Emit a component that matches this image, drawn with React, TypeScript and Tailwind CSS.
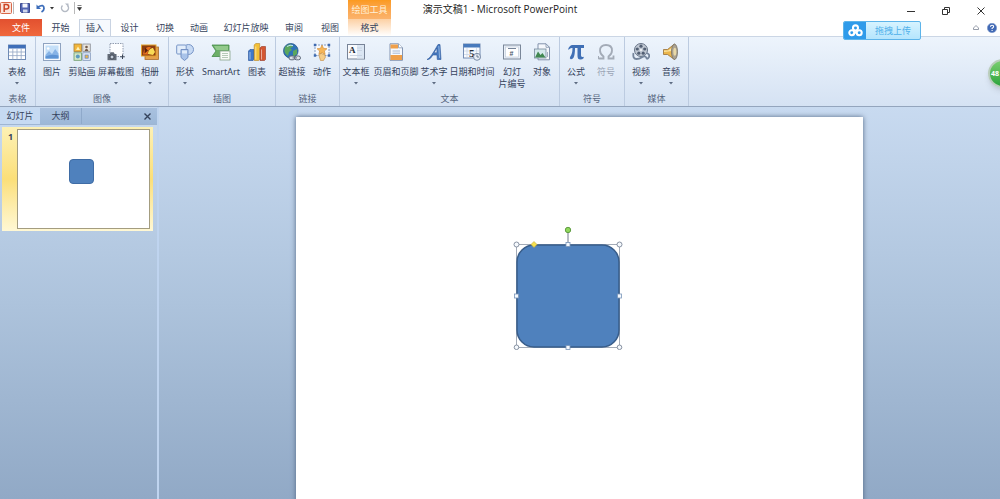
import React, { useState } from "react";
import { clsx } from "clsx";

type IconProps = { children: React.ReactNode };

type Tool = {
  label: string;
  width: string;
  icon: React.ReactNode;
  arrow?: boolean;
  disabled?: boolean;
};

type ToolGroup = {
  name: string;
  tools: Tool[];
  width: string;
};

const Icon = ({ children }: IconProps) => (
  <svg viewBox="0 0 18 18" className="h-[18px] w-[18px] shrink-0" fill="none" aria-hidden="true">
    {children}
  </svg>
);

const TableIcon = () => (
  <Icon>
    <rect x="0.5" y="2" width="17" height="14.5" fill="#fff" stroke="#6f8bb5" />
    <rect x="0.5" y="2" width="17" height="3.5" fill="#3f6fb8" />
    <path d="M1 9h16M1 12.6h16M4.8 5.5v11M9 5.5v11M13.2 5.5v11" stroke="#93a6c4" strokeWidth="0.8" />
  </Icon>
);

const PictureIcon = () => (
  <Icon>
    <rect x="0.5" y="0.5" width="17" height="17" fill="#f7fafe" stroke="#8fa3c0" />
    <rect x="2.5" y="2.5" width="13" height="13" fill="#c4dff8" />
    <path d="M2.5 12l3.5-4 3 3 3.2-5 3.3 4.5v5h-13z" fill="#86b3e6" />
    <path d="M2.5 13.5q6-3 13-1v3h-13z" fill="#5c93d4" />
    <circle cx="5.2" cy="5.5" r="1.3" fill="#fff" />
  </Icon>
);

const ClipArtIcon = () => (
  <Icon>
    <rect x="1" y="1" width="7.5" height="7.5" fill="#f2b63c" stroke="#a5803a" strokeWidth="0.8" />
    <rect x="9.8" y="1" width="7.5" height="7.5" fill="#e8e4dc" stroke="#8b8f98" strokeWidth="0.8" />
    <rect x="1" y="9.8" width="7.5" height="7.5" fill="#d5e8c9" stroke="#6c9a68" strokeWidth="0.8" />
    <rect x="9.8" y="9.8" width="7.5" height="7.5" fill="#e7eefa" stroke="#7d93b7" strokeWidth="0.8" />
    <path d="M3 7l2-3.5 2 3.5z" fill="#fff2b8" />
    <circle cx="13.5" cy="4" r="1.3" fill="#745b4b" />
    <path d="M11.500 8q2-4.500 4 0z" fill="#745b4b" />
    <circle cx="4.8" cy="13.5" r="2" fill="#5d9cc0" />
    <rect x="12" y="12" width="3.200" height="3.200" fill="#f0b748" stroke="#6787c0" strokeWidth="0.8" />
  </Icon>
);

const ScreenshotIcon = () => (
  <Icon>
    <rect x="3" y="0.5" width="13" height="13" fill="#fdfeff" stroke="#77849a" strokeWidth="0.8" strokeDasharray="1.5 1" />
    <path d="M0.5 11h2.200l1-1.800h3l1 1.800h1.800v6.200h-9z" fill="#626a76" />
    <circle cx="5" cy="14" r="2" fill="#c6cfdb" stroke="#343b46" strokeWidth="0.8" />
    <path d="M15.500 11.500v4.500M13.200 13.800h4.600" stroke="#3c4657" />
  </Icon>
);

const AlbumIcon = () => (
  <Icon>
    <rect x="4" y="4" width="13.5" height="12.5" fill="#e4a04c" stroke="#aa6d2b" strokeWidth="0.8" />
    <rect x="0.5" y="2" width="14.500" height="11" fill="#8b3d12" stroke="#e3a22a" />
    <path d="M2 11.500c1-7 5-8 8-7.500-2 3-4 4-3 7.500z" fill="#e7711e" />
    <path d="M7 11c0-4 3-6 5-6l2 4-2 3z" fill="#f9db56" />
    <path d="M4 4.500l3 3-3.500 3z" fill="#5b220d" />
  </Icon>
);

const ShapesIcon = () => (
  <Icon>
    <circle cx="12.5" cy="6.5" r="5" fill="#c6d9f3" stroke="#7795c7" />
    <rect x="0.7" y="2" width="9.5" height="9" rx="1" fill="#e2edfa" stroke="#7795c7" />
    <path d="M5 6.500h7v8l-3.500 3-3.500-3z" fill="#a9c3e9" stroke="#7491c4" />
    <path d="M6 7.500h5v3h-5z" fill="#dfebfa" />
  </Icon>
);

const SmartArtIcon = () => (
  <svg viewBox="0 0 20 18" className="h-[18px] w-5 shrink-0" fill="none" aria-hidden="true">
    <path d="M1 2h17v5l-2 6.500H1l4-5.500z" fill="#6caf67" stroke="#458b49" strokeWidth="0.8" />
    <path d="M3 3h14v4H5.500z" fill="#92c98b" />
    <rect x="9" y="8" width="10" height="9" fill="#f8fbf7" stroke="#87a48b" strokeWidth="0.8" />
    <path d="M11 10.500h6M11 12.500h6M11 14.500h6" stroke="#a3bca4" strokeWidth="0.8" />
  </svg>
);

const ChartIcon = () => (
  <Icon>
    <path d="M0.500 8l1.500-1.500h4v10l-1 1h-4.500z" fill="#3f78ca" stroke="#244f97" strokeWidth="0.6" />
    <path d="M6.200 2l1.500-1.500h4v16l-1 1h-4.500z" fill="#f4c035" stroke="#b6842a" strokeWidth="0.6" />
    <path d="M12 5l1.500-1.500h4v13l-1 1h-4.500z" fill="#d45732" stroke="#953823" strokeWidth="0.6" />
    <path d="M2 9v7.500M7.800 3.500v13M13.500 6.500v10" stroke="#fff" strokeOpacity="0.5" />
  </Icon>
);

const HyperlinkIcon = () => (
  <Icon>
    <circle cx="7.800" cy="7.800" r="7.300" fill="#2e73b8" stroke="#24558b" strokeWidth="0.8" />
    <path d="M2 4q4-4 7-2l1 2-3 1 2 2-3 2-1 4q-5-3-3-9zM10 8l4-2v5l-4 3z" fill="#5ba75d" />
    <path d="M4 3.500q3-2 6-1" stroke="#bee0f6" />
    <rect x="6" y="13" width="6" height="3.800" rx="1.900" fill="#dce2eb" stroke="#606b7c" />
    <rect x="11.500" y="13" width="6" height="3.800" rx="1.900" fill="#dce2eb" stroke="#606b7c" />
    <path d="M9.500 14.900h4.500" stroke="#606b7c" />
  </Icon>
);

const ActionIcon = () => (
  <Icon>
    <rect x="2" y="2" width="14" height="10.500" fill="#f6f9fe" stroke="#6786b6" strokeWidth="0.8" strokeDasharray="2 1" />
    <path d="M9 2l1.500 3.300 3.500.4-2.600 2.300.8 3.500-3.200-1.800-3.200 1.800.8-3.500-2.600-2.300 3.500-.4z" fill="#f5b558" stroke="#d38b30" strokeWidth="0.6" />
    <path d="M6 12.500l2-2.500 1.500 1 2 .5 1 2.500-2 3.500h-3z" fill="#f5cc87" stroke="#c38a3f" strokeWidth="0.6" />
    <path d="M.8.800h2.400v2.400H.8zM14.800.800h2.400v2.400h-2.400zM.8 11.300h2.400v2.400H.8zM14.800 11.300h2.400v2.400h-2.400z" fill="#3e6aaf" />
  </Icon>
);

const TextBoxIcon = () => (
  <Icon>
    <rect x="0.500" y="1.500" width="17" height="14.500" fill="#f8fafd" stroke="#778397" />
    <path d="M10 2h7v13.500h-7z" fill="#dbe6f3" />
    <path d="M10 5h5M10 7.500h5M3 12.500h12" stroke="#c3cedd" strokeWidth="0.8" />
    <text x="2" y="10" fontSize="9" fontWeight="700" fontFamily="Liberation Serif, serif" fill="#242b37">A</text>
  </Icon>
);

const HeaderFooterIcon = () => (
  <Icon>
    <path d="M3 .8h8.500l4 4v12.500H3z" fill="#f7fafe" stroke="#8395b2" />
    <path d="M3.500 1.500h7.500v4H3.500z" fill="#efa04b" />
    <path d="M3.500 12h11.500v5H3.500z" fill="#efa04b" />
    <path d="M11.500.8v4h4" fill="#fff" stroke="#8395b2" strokeWidth="0.8" />
    <path d="M5.500 8h7.500M5.500 10.200h7.500" stroke="#a7b9d4" />
  </Icon>
);

const WordArtIcon = () => (
  <Icon>
    <path d="M2 16.500c3-1 7-8 11-15l2 0 1 15h-3.700l-.3-4.500-4.200 0c-1.500 2.500-3 4.800-5.800 4.500zM9 9.800h3l-.2-4.800z" fill="#4779bf" stroke="#2c589a" strokeWidth="0.6" />
    <path d="M13.800 3l.8 12" stroke="#8fb5e2" />
  </Icon>
);

const DateIcon = () => (
  <Icon>
    <rect x="0.500" y="1" width="16.500" height="14" fill="#f9fbfe" stroke="#768db3" />
    <path d="M.5 1h16.500v3.500H.5z" fill="#487abc" />
    <path d="M1 8h16M1 11.500h16M4 5v10M13.500 5v10" stroke="#c5d2e5" strokeWidth="0.7" />
    <text x="6" y="13.500" fontSize="11" fontWeight="700" fontFamily="Liberation Serif, serif" fill="#252d3b">5</text>
    <circle cx="14" cy="13.800" r="3.500" fill="#e7edf6" stroke="#798ba6" />
    <path d="M14 11.500v2.500h2" stroke="#53647f" strokeWidth="0.8" />
  </Icon>
);

const SlideNumberIcon = () => (
  <Icon>
    <rect x="0.500" y="2" width="17" height="14" fill="#eaf0f8" stroke="#7a8799" />
    <rect x="2.500" y="4" width="13" height="10" fill="#fff" stroke="#bac6d5" strokeWidth="0.6" />
    <path d="M5 5.500h8" stroke="#758499" />
    <text x="6.500" y="13" fontSize="7" fontWeight="700" fontFamily="Liberation Sans, sans-serif" fill="#4a5668">#</text>
  </Icon>
);

const ObjectIcon = () => (
  <Icon>
    <path d="M5 .8h8l3.500 3.500v12.500H5z" fill="#f5f8fc" stroke="#8292ab" />
    <path d="M13 .8v3.500h3.500" stroke="#8292ab" strokeWidth="0.8" />
    <rect x="1.500" y="6" width="11.500" height="9" fill="#d5e9ec" stroke="#798a9f" strokeWidth="0.8" />
    <path d="M2 14.500l3-6 2.500 3.500 2-2 3 4.500z" fill="#418851" />
    <path d="M14.500 9v5" stroke="#91a0b4" strokeWidth="0.8" />
  </Icon>
);

const EquationIcon = () => (
  <Icon>
    <path d="M1 6.500q1.500-4.500 4.500-4.500h11.500v3h-3v7.500q0 2 2.500 1.200l.3 1.300q-1.500 1.500-3.500 1.500-2.800 0-2.800-3.500v-8h-2.500q0 7-1.500 9.800-1 1.800-2.800 1.400-1.500-.6-.5-2.400 2.300-3 2.300-8.800-2.500-.4-3.500 1.500z" fill="#3f6fb5" />
  </Icon>
);

const SymbolIcon = () => (
  <Icon>
    <path d="M1.500 15.500h5v-2q-3.500-2.500-3.500-6 0-5.500 6-5.500t6 5.500q0 3.500-3.500 6v2h5v-3" stroke="#a3abb7" strokeWidth="1.800" />
    <path d="M1.500 16v-3" stroke="#a3abb7" />
  </Icon>
);

const VideoIcon = () => (
  <Icon>
    <circle cx="9" cy="7" r="6.500" fill="#c0c8d3" stroke="#667386" />
    <circle cx="9" cy="3.200" r="1.600" fill="#536074" />
    <circle cx="5.300" cy="6" r="1.600" fill="#536074" />
    <circle cx="12.700" cy="6" r="1.600" fill="#536074" />
    <circle cx="6.800" cy="10.200" r="1.600" fill="#536074" />
    <circle cx="11.200" cy="10.200" r="1.600" fill="#536074" />
    <circle cx="9" cy="7" r="0.900" fill="#fff" />
    <path d="M1.500 10q-1 6 3 6 3 0 5-1.500 4-2.500 5 .5.500 2 2.500-1 1-3-2.500-4" stroke="#75859b" strokeWidth="1.800" />
  </Icon>
);

const AudioIcon = () => (
  <Icon>
    <path d="M1.500 6.500h4l7-5.500v15.500l-7-5h-4z" fill="#ebb64c" stroke="#987037" strokeWidth="0.8" />
    <path d="M2 7.500h4l4-3v3.500l-8 1z" fill="#fbe4a3" />
    <ellipse cx="12.500" cy="8.800" rx="3" ry="7.700" fill="#aaa292" stroke="#777061" strokeWidth="0.8" />
    <ellipse cx="12.800" cy="8.800" rx="1.500" ry="4" fill="#e9d9a7" />
  </Icon>
);

const tabs = [
  { name: "开始", width: "w-[37px]" },
  { name: "插入", width: "w-8" },
  { name: "设计", width: "w-[37px]" },
  { name: "切换", width: "w-[34px]" },
  { name: "动画", width: "w-[34px]" },
  { name: "幻灯片放映", width: "w-[60px]" },
  { name: "审阅", width: "w-9" },
  { name: "视图", width: "w-9" },
];

const groups: ToolGroup[] = [
  {
    name: "表格",
    width: "w-9",
    tools: [{ label: "表格", width: "w-[34px]", icon: <TableIcon />, arrow: true }],
  },
  {
    name: "图像",
    width: "w-[133px]",
    tools: [
      { label: "图片", width: "w-8", icon: <PictureIcon /> },
      { label: "剪贴画", width: "w-7", icon: <ClipArtIcon /> },
      { label: "屏幕截图", width: "w-10", icon: <ScreenshotIcon />, arrow: true },
      { label: "相册", width: "w-7", icon: <AlbumIcon />, arrow: true },
    ],
  },
  {
    name: "插图",
    width: "w-[107px]",
    tools: [
      { label: "形状", width: "w-8", icon: <ShapesIcon />, arrow: true },
      { label: "SmartArt", width: "w-10", icon: <SmartArtIcon /> },
      { label: "图表", width: "w-8", icon: <ChartIcon /> },
    ],
  },
  {
    name: "链接",
    width: "w-16",
    tools: [
      { label: "超链接", width: "w-8", icon: <HyperlinkIcon /> },
      { label: "动作", width: "w-7", icon: <ActionIcon /> },
    ],
  },
  {
    name: "文本",
    width: "w-[220px]",
    tools: [
      { label: "文本框", width: "w-8", icon: <TextBoxIcon />, arrow: true },
      { label: "页眉和页脚", width: "w-12", icon: <HeaderFooterIcon /> },
      { label: "艺术字", width: "w-7", icon: <WordArtIcon />, arrow: true },
      { label: "日期和时间", width: "w-12", icon: <DateIcon /> },
      { label: "幻灯\n片编号", width: "w-8", icon: <SlideNumberIcon /> },
      { label: "对象", width: "w-7", icon: <ObjectIcon /> },
    ],
  },
  {
    name: "符号",
    width: "w-[65px]",
    tools: [
      { label: "公式", width: "w-8", icon: <EquationIcon />, arrow: true },
      { label: "符号", width: "w-7", icon: <SymbolIcon />, disabled: true },
    ],
  },
  {
    name: "媒体",
    width: "w-16",
    tools: [
      { label: "视频", width: "w-8", icon: <VideoIcon />, arrow: true },
      { label: "音频", width: "w-7", icon: <AudioIcon />, arrow: true },
    ],
  },
];

const DownArrow = () => (
  <svg viewBox="0 0 4 3" className="mt-1 h-[3px] w-1" aria-hidden="true">
    <path d="M0 0h4L2 2.500z" fill="#5d6b82" />
  </svg>
);

const ToolButton = ({ tool }: { tool: Tool }) => (
  <button
    type="button"
    disabled={tool.disabled}
    className={clsx(
      "flex flex-col items-center whitespace-pre text-center text-[9px] leading-3",
      tool.width,
      tool.disabled ? "text-[#9aa5b6]" : "text-[#35435c]"
    )}
  >
    {tool.icon}
    <span className="mt-[5px]">{tool.label}</span>
    {tool.arrow && <DownArrow />}
  </button>
);

const QuickAccess = () => (
  <div className="flex h-4 w-[348px] shrink-0 items-center">
    <button type="button" aria-label="PowerPoint" className="w-3">
      <svg viewBox="0 0 12 12" className="h-3 w-3">
        <rect x="0.500" y="0.500" width="11" height="11" rx="1" fill="#fbe5dc" stroke="#d8694a" />
        <path d="M4.200 10V2.500h2.300a2 2 0 0 1 0 4.500H4.200" fill="none" stroke="#cc4525" strokeWidth="1.500" />
      </svg>
    </button>
    <span className="ml-px h-3 w-px bg-[#b9b9b9]" />
    <button type="button" aria-label="保存" className="ml-[6px]">
      <svg viewBox="0 0 10 10" className="h-[10px] w-[10px]">
        <path d="M.5.500h9v9h-8l-1-1z" fill="#5265b3" stroke="#3c4b91" />
        <path d="M2.500.500h5v4h-5z" fill="#f4f6fc" />
        <path d="M3 6.500h4.500v3H3z" fill="#cfd6ec" />
      </svg>
    </button>
    <button type="button" aria-label="撤消" className="ml-[6px]">
      <svg viewBox="0 0 10 10" className="h-[10px] w-[10px]" fill="none">
        <path d="M2 4q6-3.500 6 1.500 0 2-2.500 3.500" stroke="#3c6dba" strokeWidth="1.800" />
        <path d="M.5 1.500v4.500h4.500z" fill="#3c6dba" />
      </svg>
    </button>
    <svg viewBox="0 0 4 3" className="ml-1 h-[3px] w-1">
      <path d="M0 0h4L2 2.500z" fill="#333" />
    </svg>
    <button type="button" aria-label="恢复" disabled className="ml-[6px]">
      <svg viewBox="0 0 10 10" className="h-[10px] w-[10px]" fill="none">
        <path d="M7.500 2.500a3.500 3.500 0 1 1-5 0" stroke="#b4bac4" strokeWidth="1.500" />
        <path d="M5 .5h3.500v3.500z" fill="#b4bac4" />
      </svg>
    </button>
    <span className="ml-1 h-3 w-px bg-[#b9b9b9]" />
    <button type="button" aria-label="自定义快速访问工具栏" className="ml-[2px]">
      <svg viewBox="0 0 5 6" className="h-[6px] w-[5px]">
        <path d="M.5.500h4M.5 2.500h4L2.500 5.500z" fill="#333" stroke="#333" strokeWidth="0.6" />
      </svg>
    </button>
  </div>
);

const WindowButtons = () => (
  <div className="flex flex-1 justify-end">
    <div className="flex items-center gap-[27px] pr-[15px] pt-[2px]">
      <button type="button" aria-label="最小化">
        <svg viewBox="0 0 8 8" className="h-2 w-2"><path d="M0 4.500h8" stroke="#333" /></svg>
      </button>
      <button type="button" aria-label="还原">
        <svg viewBox="0 0 8 8" className="h-2 w-2" fill="none" stroke="#333">
          <path d="M.5 2.500h5v5h-5zM2.500 2.500v-2h5v5h-2" />
        </svg>
      </button>
      <button type="button" aria-label="关闭">
        <svg viewBox="0 0 8 8" className="h-2 w-2"><path d="M.5.500l7 7M7.500.500l-7 7" stroke="#333" /></svg>
      </button>
    </div>
  </div>
);

const Header = () => {
  const [active, setActive] = useState("插入");

  return (
    <header className="bg-white text-[#35435c]">
      <div className="flex h-[19px]">
        <div className="flex flex-1">
          <QuickAccess />
          <div className="w-[43px] shrink-0 bg-linear-to-b from-[#fb9a1e] to-[#fbb36c] pt-1 text-center text-[9px] leading-3 text-[#fff0d8]">
            绘图工具
          </div>
        </div>
        <h1 className="pt-px font-['Open_Sans','Noto_Sans_CJK_SC',sans-serif] text-[10px] leading-4 text-[#222]">
          演示文稿1 - Microsoft PowerPoint
        </h1>
        <WindowButtons />
      </div>
      <nav className="flex h-[17px] items-stretch text-[9px] leading-[17px]">
        <button type="button" className="w-[42px] bg-linear-to-b from-[#e2502f] to-[#f0683c] text-white">
          文件
        </button>
        {tabs.map((tab) => (
          <button
            key={tab.name}
            type="button"
            onClick={() => setActive(tab.name)}
            className={clsx(
              "whitespace-nowrap",
              tab.width,
              active === tab.name && "border-x border-t border-[#c9d3e2] bg-[#f6f9fd] leading-4"
            )}
          >
            {tab.name}
          </button>
        ))}
        <button type="button" className="w-[43px] bg-linear-to-b from-[#fcd0a3] to-white">
          格式
        </button>
        <div className="flex flex-1 items-center justify-end gap-2 pr-[3px]">
          <button type="button" aria-label="最小化功能区">
            <svg viewBox="0 0 6 5" className="h-[5px] w-[6px]" fill="none">
              <path d="M.5 3l2.500-2.500 2.500 2.500v1.500h-5z" stroke="#7b8494" strokeWidth="0.8" />
            </svg>
          </button>
          <button type="button" aria-label="帮助">
            <svg viewBox="0 0 10 10" className="h-[10px] w-[10px]">
              <circle cx="5" cy="5" r="4.700" fill="#4169b5" stroke="#7f9acb" strokeWidth="0.6" />
              <path d="M3.500 3.800q0-1.600 1.600-1.600t1.500 1.500q0 .8-1.500 1.600v.8M5.100 7v1" fill="none" stroke="#fff" strokeWidth="1.100" />
            </svg>
          </button>
        </div>
      </nav>
    </header>
  );
};

const Ribbon = () => (
  <section className="flex h-[71px] border-t border-b border-t-[#cbd6e5] border-b-[#94a5bd] bg-linear-to-b from-[#edf4fc] to-[#d5e2f3]">
    {groups.map((group) => (
      <div key={group.name} className={clsx("flex flex-col border-r border-[#bccbe0]", group.width)}>
        <div className="flex h-[55px] items-start pt-[6px]">
          {group.tools.map((tool) => (
            <ToolButton key={tool.label} tool={tool} />
          ))}
        </div>
        <div className="text-center text-[9px] leading-[14px] text-[#56657e]">{group.name}</div>
      </div>
    ))}
  </section>
);

const SlidePane = () => (
  <aside className="flex w-[159px] shrink-0 flex-col border-r-2 border-[#bfd4ef] text-[9px] text-[#35435c]">
    <div className="mt-px flex h-[17px] border-b border-[#9fb6d3] bg-linear-to-b from-[#a9c1df] to-[#9db8d8] leading-4">
      <button type="button" className="w-10 bg-[#c6daf2]">幻灯片</button>
      <button type="button" className="w-[42px] border-r border-[#8fa9ca]">大纲</button>
      <button type="button" aria-label="关闭" className="ml-auto pr-[6px]">
        <svg viewBox="0 0 7 7" className="h-[7px] w-[7px]"><path d="M.5.500l6 6M6.500.500l-6 6" stroke="#35435c" strokeWidth="1.400" /></svg>
      </button>
    </div>
    <button
      type="button"
      aria-label="幻灯片 1"
      className="ml-[2px] mr-1 mt-[2px] flex bg-linear-to-b from-[#fdf1b4] via-[#fbdf78] to-[#fff8d4] p-[2px] pr-[3px]"
    >
      <span className="w-[13px] pt-[2px] text-[9px] leading-3 font-bold">1</span>
      <span className="relative block aspect-4/3 flex-1 border border-[#a49d80] bg-white">
        <span className="absolute left-[39%] top-[30%] h-[25px] w-[25px] rounded-[4px] border border-[#3f6ca5] bg-[#4f81bd]" />
      </span>
    </button>
  </aside>
);

const SelectedShape = () => (
  <svg
    viewBox="0 0 112 126"
    className="absolute left-[38%] top-[107px] h-[126px] w-28"
    fill="none"
    role="img"
    aria-label="圆角矩形"
  >
    <rect x="5.500" y="20.500" width="103" height="103" stroke="#8d97a6" strokeWidth="0.8" />
    <rect x="6" y="21" width="102" height="102" rx="17" fill="#4f81bd" stroke="#385d8a" strokeWidth="1.500" />
    <path d="M57 8v12" stroke="#70798a" />
    <circle cx="57" cy="6" r="2.700" fill="#8fd75b" stroke="#57943a" strokeWidth="0.9" />
    <path d="M23 17.500l3 3-3 3-3-3z" fill="#f6e14e" stroke="#bfa63a" strokeWidth="0.6" />
    <g fill="#f5f9fd" stroke="#7c8798" strokeWidth="0.9">
      <circle cx="5.500" cy="20.500" r="2.500" />
      <circle cx="108.500" cy="20.500" r="2.500" />
      <circle cx="5.500" cy="123.300" r="2.300" />
      <circle cx="108.500" cy="123.300" r="2.300" />
    </g>
    <g fill="#f5f9fd" stroke="#7894b8" strokeWidth="0.8">
      <rect x="55" y="18.500" width="4" height="4" />
      <rect x="55" y="121.500" width="4" height="4" />
      <rect x="3.500" y="70" width="4" height="4" />
      <rect x="106.500" y="70" width="4" height="4" />
    </g>
  </svg>
);

const UploadBadge = () => (
  <button
    type="button"
    className="absolute right-[79px] top-[21px] flex h-[19px] w-[78px] overflow-hidden rounded-[2px] border border-[#5db4ea] bg-linear-to-b from-[#d6f3ff] to-[#b5e5fd] text-[9px] leading-[17px] text-[#4eb0ea]"
  >
    <span className="flex h-full w-[22px] items-center justify-center bg-[#2f9bea]">
      <svg viewBox="0 0 16 14" className="h-[13px] w-[15px]" fill="none" stroke="#fff" strokeWidth="2.200">
        <circle cx="8" cy="4.200" r="2.700" />
        <circle cx="4" cy="9.500" r="2.700" />
        <circle cx="12" cy="9.500" r="2.700" />
        <path d="M5.500 11l5-4" />
      </svg>
    </span>
    <span className="flex-1 text-center">拖拽上传</span>
  </button>
);

const App = () => {
  return (
    <div className="relative flex h-screen flex-col overflow-hidden font-['Noto_Sans','Noto_Sans_CJK_SC',sans-serif]">
      <Header />
      <Ribbon />
      <main className="flex min-h-0 flex-1 bg-linear-to-b from-[#c8daf0] via-[#adc3dc] to-[#91a9c6]">
        <SlidePane />
        <div className="flex-1 overflow-hidden px-[137px] pt-[10px]">
          <div className="relative aspect-4/3 w-full bg-white shadow-[0_0_5px_#526783]">
            <SelectedShape />
          </div>
        </div>
      </main>
      <UploadBadge />
      <div className="absolute -right-[17px] top-[59px] flex h-[29px] w-[29px] items-center rounded-full border-2 border-[#b9cdbb] bg-linear-to-b from-[#78ce70] to-[#28a43c] pl-px text-[7px] font-bold leading-3 text-white shadow-md">
        48
      </div>
    </div>
  );
};

export default App;
